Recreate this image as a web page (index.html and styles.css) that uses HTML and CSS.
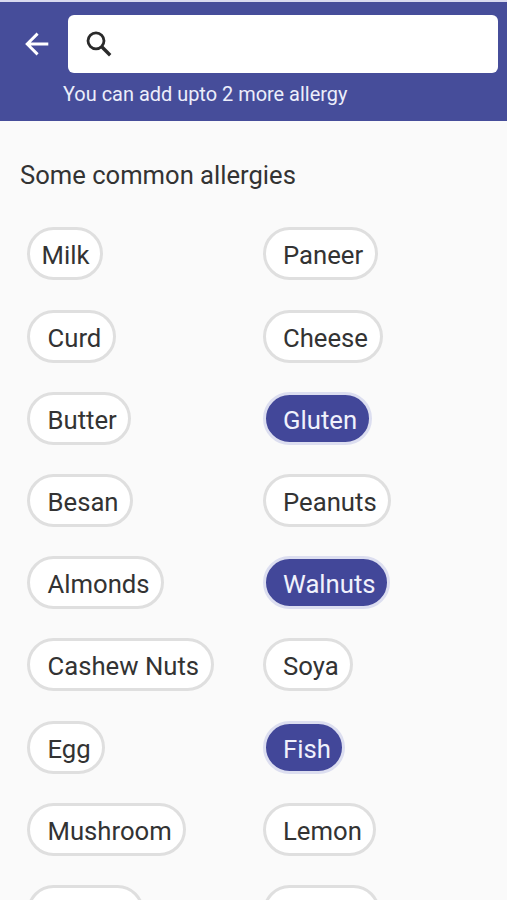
FILE: index.html
```html
<!DOCTYPE html>
<html lang="en">
<head>
<meta charset="utf-8">
<title>Allergies</title>
<link rel="stylesheet" href="styles.css">
</head>
<body>
<header class="header">
  <div class="bar">
    <svg class="back" viewBox="0 0 24 24" fill="none" stroke="#fff" stroke-width="2.9"><path d="M23.3 12H2.4M12.6 1.6L2.2 12l10.4 10.4"/></svg>
    <div class="search">
      <svg class="glass" viewBox="0 0 26 26" fill="none" stroke="#2a2a2a"><circle cx="10" cy="9.8" r="8" stroke-width="2.8"/><path d="M15.5 15.5L24.2 24.2" stroke-width="3.4"/></svg>
    </div>
  </div>
  <p class="hint">You can add upto 2 more allergy</p>
</header>
<main class="content">
  <h1 class="title">Some common allergies</h1>
  <div class="grid">
    <span class="chip short">Milk</span><span class="chip">Paneer</span>
    <span class="chip">Curd</span><span class="chip">Cheese</span>
    <span class="chip">Butter</span><span class="chip selected">Gluten</span>
    <span class="chip">Besan</span><span class="chip">Peanuts</span>
    <span class="chip">Almonds</span><span class="chip selected">Walnuts</span>
    <span class="chip">Cashew Nuts</span><span class="chip">Soya</span>
    <span class="chip">Egg</span><span class="chip selected">Fish</span>
    <span class="chip">Mushroom</span><span class="chip">Lemon</span>
    <span class="chip blank"></span><span class="chip blank"></span>
  </div>
</main>
</body>
</html>
```
FILE: styles.css
```css
* { box-sizing: border-box; }
html, body { height: 900px; overflow: hidden; }
body {
  margin: 0;
  background: #fafafa;
  color: #333;
  font-family: Roboto, "Liberation Sans", sans-serif;
}
.header {
  height: 121px;
  padding: 13px 9px 0 25px;
  background: #464d9a;
  border-top: 2px solid #d9daf0;
}
.bar { display: flex; }
.back { width: 24px; height: 24px; margin: 17px 19px 0 0; }
.search {
  flex: 1;
  height: 58px;
  padding: 16px 0 0 18px;
  background: #fff;
  border-radius: 6px;
}
.glass { display: block; width: 26px; height: 26px; }
.hint {
  margin: 9px 0 0 38px;
  color: #eceefb;
  font-size: 19.95px;
  line-height: 24px;
  white-space: nowrap;
}
.content { padding: 38px 0 0 20px; }
.title {
  margin: 0;
  font-size: 25.6px;
  font-weight: 400;
  line-height: 33px;
  white-space: nowrap;
}
.grid {
  display: grid;
  grid-template-columns: 235.5px 1fr;
  grid-auto-rows: 53px;
  row-gap: 29.2px;
  justify-items: start;
  margin: 35.4px 0 0 7px;
}
.chip {
  height: 53px;
  padding: 0 11.5px 0 17.5px;
  border: 3px solid #dfdfdf;
  border-radius: 27px;
  background: #fff;
  font-size: 25.7px;
  line-height: 50px;
  white-space: nowrap;
}
.short { padding: 0 10.5px 0 11.5px; }
.selected {
  background: #424799;
  border-color: #dcdef0;
  color: #f0f1fc;
}
.blank { width: 117px; }
```
